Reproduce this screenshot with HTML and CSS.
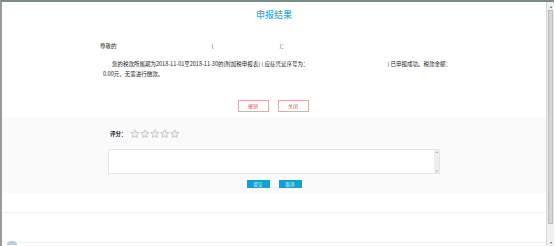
FILE: index.html
```html
<!DOCTYPE html>
<html lang="zh-CN">
<head>
    <meta charset="UTF-8">
    <title>申报结果</title>
    <link rel="stylesheet" href="styles.css">
</head>
<body>
    <div class="frame">
        <div class="content">
            <h1 class="title">申报结果</h1>

            <div class="result">
                <p class="greet">尊敬的<span class="gap-a"></span>(<span class="gap-b"></span>)：</p>
                <p class="msg">您的税款所属期为2018-11-01至2018-11-30的[附加税申报表] ( 应征凭证序号为：<span class="gap-c"></span>) 已申报成功。税款金额：0.00元，无需进行缴款。</p>
            </div>

            <div class="actions">
                <button class="btn-line">撤销</button>
                <button class="btn-line">关闭</button>
            </div>

            <section class="rating">
                <div class="rating-inner">
                    <div class="score">
                        <span class="score-label">评分：</span>
                        <span class="stars">
                            <svg viewBox="0 0 20 20"><path d="M10 1.5l2.6 5.4 5.9.8-4.3 4.1 1 5.9L10 14.9l-5.2 2.8 1-5.9-4.3-4.1 5.9-.8z"/></svg>
                            <svg viewBox="0 0 20 20"><path d="M10 1.5l2.6 5.4 5.9.8-4.3 4.1 1 5.9L10 14.9l-5.2 2.8 1-5.9-4.3-4.1 5.9-.8z"/></svg>
                            <svg viewBox="0 0 20 20"><path d="M10 1.5l2.6 5.4 5.9.8-4.3 4.1 1 5.9L10 14.9l-5.2 2.8 1-5.9-4.3-4.1 5.9-.8z"/></svg>
                            <svg viewBox="0 0 20 20"><path d="M10 1.5l2.6 5.4 5.9.8-4.3 4.1 1 5.9L10 14.9l-5.2 2.8 1-5.9-4.3-4.1 5.9-.8z"/></svg>
                            <svg viewBox="0 0 20 20"><path d="M10 1.5l2.6 5.4 5.9.8-4.3 4.1 1 5.9L10 14.9l-5.2 2.8 1-5.9-4.3-4.1 5.9-.8z"/></svg>
                        </span>
                    </div>
                    <div class="textbox">
                        <div class="textbox-area"></div>
                        <div class="textbox-bar">
                            <span class="mini-arrow">&#9652;</span>
                            <span class="mini-arrow">&#9662;</span>
                        </div>
                    </div>
                    <div class="actions-blue">
                        <button class="btn-blue">提交</button>
                        <button class="btn-blue">取消</button>
                    </div>
                </div>
            </section>

            <div class="footer-space"></div>
            <div class="footer-line"></div>
            <div class="footer-bottom">
                <span class="float-tab"></span>
            </div>
        </div>

        <div class="scrollbar">
            <div class="sb-btn">&#9652;</div>
            <div class="sb-thumb"></div>
            <div class="sb-track"></div>
            <div class="sb-btn">&#9662;</div>
        </div>
    </div>
</body>
</html>
```

FILE: styles.css
```css
* {
    margin: 0;
    padding: 0;
    box-sizing: border-box;
    font-family: 'Noto Sans CJK SC', 'Liberation Sans', sans-serif;
}

body {
    background-color: #fff;
    width: 555px;
    height: 246px;
    overflow: hidden;
}

.frame {
    display: flex;
    width: 554px;
    height: 246px;
    border-top: 2px solid #7d8a8a;
    border-left: 2px solid #9a9a9a;
    overflow: hidden;
}

.content {
    flex: 1;
    display: flex;
    flex-direction: column;
    background: #fff;
}

.title {
    color: #36acd8;
    font-size: 9px;
    font-weight: 500;
    text-align: center;
    line-height: 12px;
    margin-top: 7px;
    height: 12px;
}

.result {
    width: 356px;
    margin: 20px 0 0 98px;
    color: #222;
    font-size: 5.5px;
}

.greet {
    line-height: 10px;
}

.gap-a {
    display: inline-block;
    width: 95px;
}

.gap-b {
    display: inline-block;
    width: 66px;
}

.gap-c {
    display: inline-block;
    width: 79px;
}

.msg {
    margin-top: 8px;
    line-height: 10px;
    text-indent: 9px;
    width: 350px;
    margin-left: 3px;
}

.actions {
    display: flex;
    justify-content: center;
    gap: 9px;
    margin-top: 21px;
    padding-right: 2px;
}

.btn-line {
    width: 31px;
    height: 12px;
    background: #fff;
    border: 1px solid #f2a3a3;
    color: #e05a5a;
    font-size: 5px;
    line-height: 10px;
    cursor: pointer;
}

.rating {
    margin-top: 6px;
    background: #fafafa;
    height: 76px;
}

.rating-inner {
    width: 332px;
    margin: 0 auto;
    padding-top: 11px;
}

.score {
    display: flex;
    align-items: center;
    height: 10px;
}

.score-label {
    color: #222;
    font-size: 5.5px;
    font-weight: 700;
    margin-left: 2px;
    width: 20px;
}

.stars {
    display: flex;
    gap: 0.5px;
}

.stars svg {
    width: 9.6px;
    height: 9.6px;
    fill: #efefef;
    stroke: #b5b5b5;
    stroke-width: 1.4;
    stroke-linejoin: round;
}

.textbox {
    display: flex;
    margin-top: 10px;
    height: 25px;
    border: 1px solid #e6e6e6;
    background: #fff;
}

.textbox-area {
    flex: 1;
}

.textbox-bar {
    width: 5px;
    background: #eeeeee;
    display: flex;
    flex-direction: column;
    justify-content: space-between;
    align-items: center;
}

.mini-arrow {
    font-size: 3px;
    color: #888;
    line-height: 4px;
}

.actions-blue {
    display: flex;
    justify-content: center;
    gap: 9px;
    margin-top: 6px;
}

.btn-blue {
    width: 23px;
    height: 8px;
    background: #0aa3d3;
    border: none;
    color: #e6f5fb;
    font-size: 4.5px;
    line-height: 8px;
    cursor: pointer;
}

.footer-space {
    height: 19px;
}

.footer-line {
    height: 30px;
    border-top: 1px solid #f0f0f0;
}

.footer-bottom {
    position: relative;
    border-top: 1px solid #f0f0f0;
    height: 4px;
}

.float-tab {
    position: absolute;
    left: 5px;
    top: -2px;
    width: 10px;
    height: 4px;
    border-radius: 5px 5px 0 0;
    background: #b9cfe0;
}

.scrollbar {
    width: 8px;
    display: flex;
    flex-direction: column;
    background: #f0f0f0;
    border-left: 1px solid #d8d8d8;
}

.sb-btn {
    height: 8px;
    font-size: 4px;
    line-height: 8px;
    text-align: center;
    color: #666;
    background: #f0f0f0;
}

.sb-thumb {
    height: 214px;
    margin: 0 1px;
    background: #d6d6d6;
    border: 1px solid #bcbcbc;
}

.sb-track {
    flex: 1;
}
```
